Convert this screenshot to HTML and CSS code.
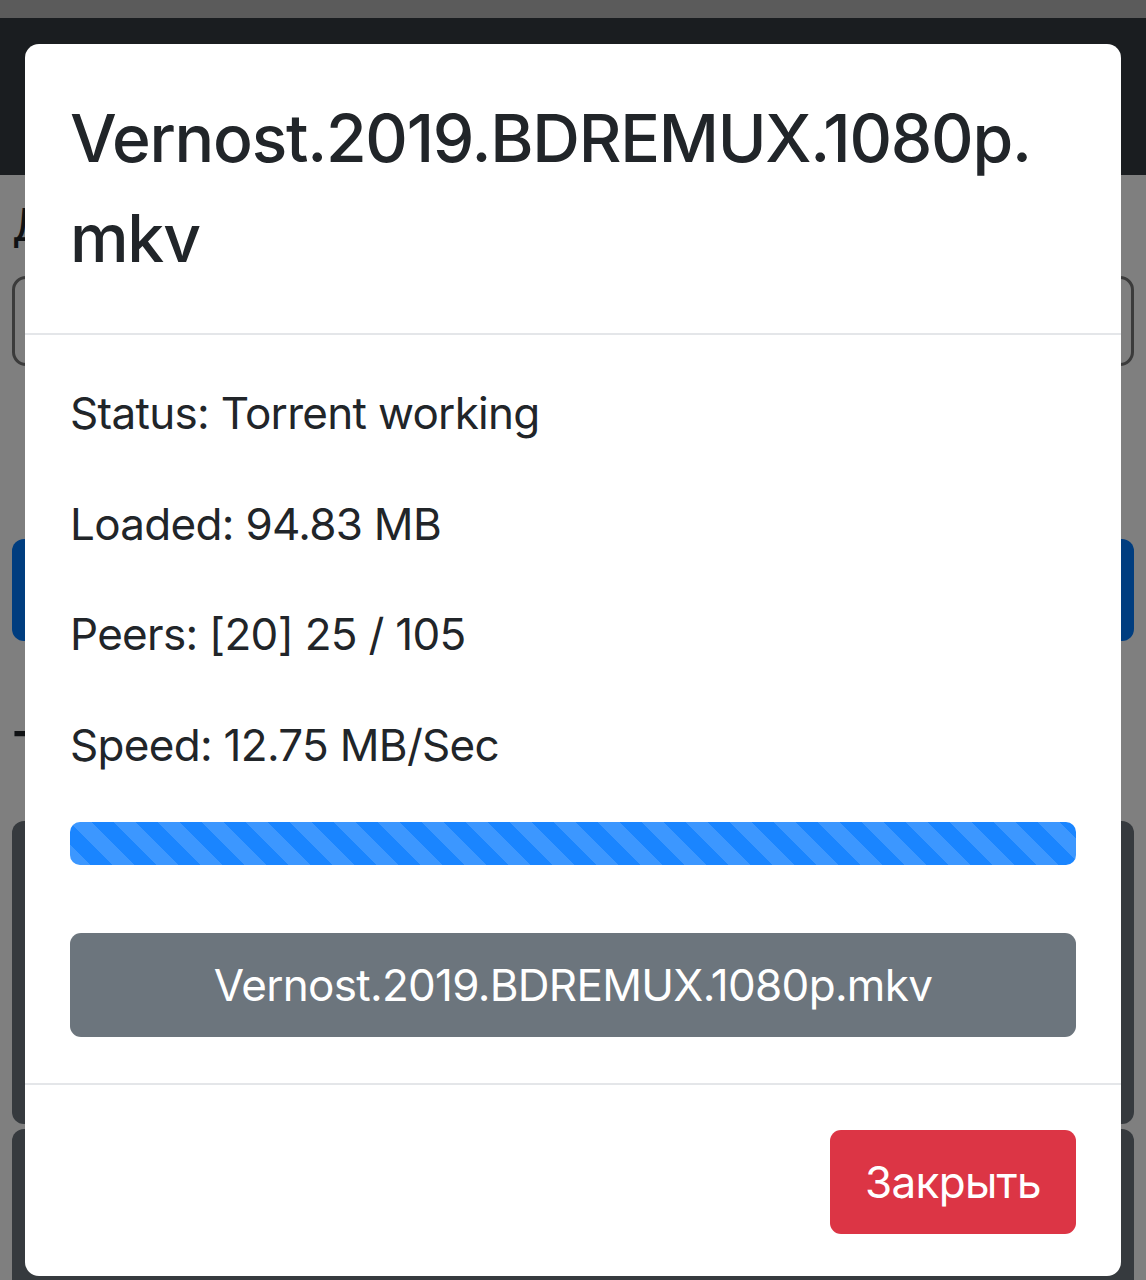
FILE: index.html
```html
<!DOCTYPE html>
<html lang="ru">
<head>
    <meta charset="UTF-8">
    <meta name="viewport" content="width=device-width, initial-scale=1.0">
    <title>TorrServer</title>
    <link rel="stylesheet" href="styles.css">
</head>
<body>
    <div class="statusbar"></div>
    <nav class="navbar"></nav>
    <div class="container">
        <label class="label">Д</label>
        <div class="input"></div>
        <div class="btn-add"></div>
        <h3 class="heading">Т</h3>
        <div class="card"></div>
        <div class="card"></div>
    </div>

    <!-- затемнение под окном -->
    <div class="backdrop"></div>

    <div class="modal">
        <div class="modal-content">
            <div class="modal-header">
                <h5 class="modal-title">Vernost.2019.BDREMUX.1080p.<wbr>mkv</h5>
            </div>
            <div class="modal-body">
                <p>Status: Torrent working</p>
                <p>Loaded: 94.83 MB</p>
                <p>Peers: [20] 25 / 105</p>
                <p>Speed: 12.75 MB/Sec</p>
                <div class="progress">
                    <div class="progress-bar" style="width: 100%"></div>
                </div>
                <a href="#" class="btn btn-file">Vernost.2019.BDREMUX.1080p.mkv</a>
            </div>
            <div class="modal-footer">
                <a href="#" class="btn btn-close">Закрыть</a>
            </div>
        </div>
    </div>
</body>
</html>
```

FILE: styles.css
```css
body{
    margin: 0;
    padding: 0;
    background: #fff;
    font-family: Inter, "Noto Sans", "Liberation Sans", sans-serif;
    color: #212529;
    overflow: hidden;
    height: 1280px;
}
.statusbar{
    height: 18px;
    background: #b6b6b6;
}
.navbar{
    height: 157px;
    background: #343a40;
}
.container{
    padding: 0 12px;
}
.label{
    display: block;
    font-size: 45px;
    line-height: 60px;
    margin-top: 20px;
}
.input{
    height: 84px;
    margin-top: 21px;
    border: 3px solid #777;
    border-radius: 14px;
}
.btn-add{
    height: 102px;
    margin-top: 173px;
    background: #007bff;
    border-radius: 12px;
}
.heading{
    font-size: 56px;
    line-height: 70px;
    margin: 76px 0 0;
    font-weight: 500;
}
.card{
    height: 303px;
    margin-top: 34px;
    background: #6c757d;
    border-radius: 12px;
}
.card + .card{
    margin-top: 5px;
}

.backdrop{
    position: fixed;
    top: 0;
    left: 0;
    right: 0;
    bottom: 0;
    background: rgba(0, 0, 0, .5);
}
.modal{
    position: fixed;
    top: 0;
    left: 0;
    right: 0;
    bottom: 0;
    padding: 44px 25px 0;
}
.modal-content{
    background: #fff;
    border-radius: 14px;
}
.modal-header{
    padding: 44px 45px 45px;
    border-bottom: 2px solid #e4e6e9;
}
.modal-title{
    margin: 0;
    font-size: 66px;
    line-height: 100px;
    font-weight: 500;
    letter-spacing: -1.25px;
    overflow-wrap: break-word;
}
.modal-body{
    padding: 44px 45px 46px;
}
.modal-body p{
    margin: 0 0 42px;
    font-size: 44px;
    line-height: 68.7px;
    letter-spacing: -0.7px;
}
.progress{
    height: 43px;
    border-radius: 10px;
    background: #e9ecef;
    overflow: hidden;
    display: flex;
}
.progress-bar{
    background-color: #1a85ff;
    background-image: linear-gradient(45deg, rgba(255,255,255,.15) 25%, transparent 25%, transparent 50%, rgba(255,255,255,.15) 50%, rgba(255,255,255,.15) 75%, transparent 75%, transparent);
    background-size: 44px 44px;
}
.btn{
    display: block;
    font-size: 44px;
    line-height: 104px;
    letter-spacing: -0.7px;
    text-align: center;
    color: #fff;
    text-decoration: none;
    border-radius: 11px;
}
.btn-file{
    margin-top: 68px;
    background: #6c757d;
}
.modal-footer{
    padding: 45px 45px 42px;
    border-top: 2px solid #e4e6e9;
    display: flex;
    justify-content: flex-end;
}
.btn-close{
    width: 246px;
    background: #dc3545;
}
```
